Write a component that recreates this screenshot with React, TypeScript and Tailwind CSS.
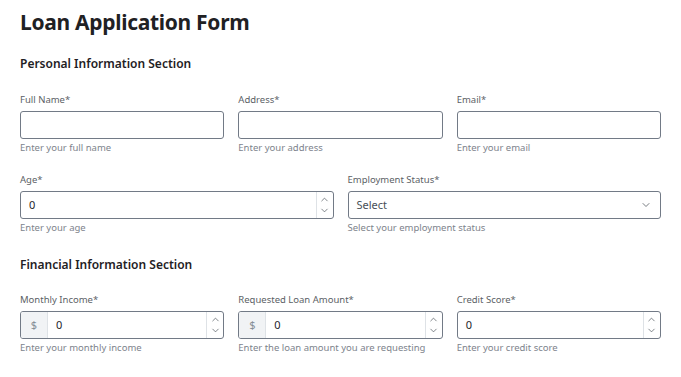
import { ChevronDown, ChevronUp } from "lucide-react";

const font = { fontFamily: '"Noto Sans", "Open Sans", Arial, sans-serif' };

function Stepper() {
  return (
    <div className="flex w-[17px] flex-col items-center justify-between border-l border-[#dee2e6] py-[2px] text-[#495057]">
      <ChevronUp size={11} strokeWidth={1.5} />
      <ChevronDown size={11} strokeWidth={1.5} />
    </div>
  );
}

function Field({
  label,
  help,
  children,
}: {
  label: string;
  help: string;
  children: React.ReactNode;
}) {
  return (
    <div className="flex min-w-0 flex-col">
      <label className="text-[9.5px] leading-[12px] text-[#5c5f66]">{label}</label>
      <div className="mt-[5px] flex h-[28px] overflow-hidden rounded-[3px] border border-[#727a86] bg-white">
        {children}
      </div>
      <p className="mt-[3px] text-[9.5px] leading-[12px] text-[#7d838c]">{help}</p>
    </div>
  );
}

function NumberBody({ prefix }: { prefix?: boolean }) {
  return (
    <>
      {prefix && (
        <div className="flex w-[27px] items-center justify-center border-r border-[#dee2e6] bg-[#f1f3f5] text-[11px] text-[#868e96]">
          $
        </div>
      )}
      <div className="flex flex-1 items-center px-[8px] text-[11px] text-[#25262b]">0</div>
      <Stepper />
    </>
  );
}

export default function App() {
  return (
    <div className="min-h-screen bg-white px-[20px] pt-[8px]" style={font}>
      <h1 className="text-[21px] font-bold leading-[28px] tracking-[-0.3px] text-[#1f2124]">
        Loan Application Form
      </h1>

      <h2 className="mt-[20px] text-[12px] font-semibold leading-[16px] text-[#1f2124]">
        Personal Information Section
      </h2>

      <div className="mt-[22px] grid w-[641px] grid-cols-3 gap-x-[14px]">
        <Field label="Full Name*" help="Enter your full name">
          <div className="flex-1" />
        </Field>
        <Field label="Address*" help="Enter your address">
          <div className="flex-1" />
        </Field>
        <Field label="Email*" help="Enter your email">
          <div className="flex-1" />
        </Field>
      </div>

      <div className="mt-[20px] grid w-[641px] grid-cols-2 gap-x-[14px]">
        <Field label="Age*" help="Enter your age">
          <NumberBody />
        </Field>
        <Field label="Employment Status*" help="Select your employment status">
          <div className="flex flex-1 items-center justify-between px-[8px] text-[11px] text-[#495057]">
            <span>Select</span>
            <ChevronDown size={12} strokeWidth={1.5} className="text-[#495057]" />
          </div>
        </Field>
      </div>

      <h2 className="mt-[23px] text-[12px] font-semibold leading-[16px] text-[#1f2124]">
        Financial Information Section
      </h2>

      <div className="mt-[21px] grid w-[641px] grid-cols-3 gap-x-[14px]">
        <Field label="Monthly Income*" help="Enter your monthly income">
          <NumberBody prefix />
        </Field>
        <Field label="Requested Loan Amount*" help="Enter the loan amount you are requesting">
          <NumberBody prefix />
        </Field>
        <Field label="Credit Score*" help="Enter your credit score">
          <NumberBody />
        </Field>
      </div>
    </div>
  );
}
